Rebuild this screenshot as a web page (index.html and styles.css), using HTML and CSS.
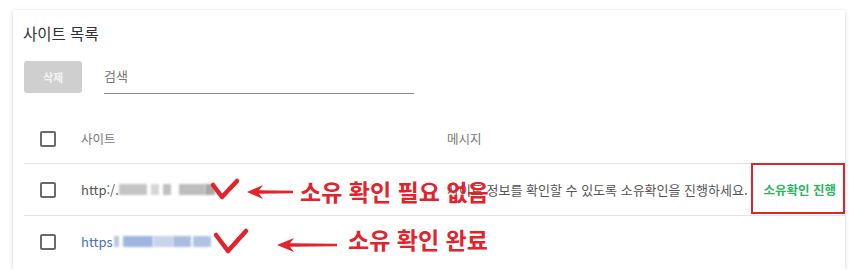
FILE: index.html
```html
<!DOCTYPE html>
<html lang="ko">
<head>
<meta charset="utf-8">
<link rel="stylesheet" href="styles.css">
</head>
<body>
<div class="card">
  <h2 class="title">사이트 목록</h2>
  <div class="toolbar">
    <button class="btn-delete" disabled>삭제</button>
    <div class="search">검색</div>
  </div>
  <div class="table">
    <div class="row head">
      <div class="cell check"><span class="box"></span></div>
      <div class="cell site">사이트</div>
      <div class="cell msg">메시지</div>
    </div>
    <div class="row">
      <div class="cell check"><span class="box"></span></div>
      <div class="cell site"><span class="url">http:/.</span><span class="blur b1"></span><span class="blur b2"></span><span class="blur b3"></span><span class="blur b4"></span><span class="blur b5"></span></div>
      <div class="cell msg"><span class="msg-text">사이트 정보를 확인할 수 있도록 소유확인을 진행하세요.</span><a class="verify">소유확인 진행</a></div>
    </div>
    <div class="row">
      <div class="cell check"><span class="box"></span></div>
      <div class="cell site"><span class="url link">https</span><span class="blur c1"></span><span class="blur c2"></span><span class="blur c3"></span><span class="blur c4"></span><span class="blur c5"></span></div>
      <div class="cell msg"></div>
    </div>
  </div>

  <svg class="mark mark1" viewBox="0 0 30 22"><path d="M3 7 L12 19 L27 3" /></svg>
  <svg class="arrow arrow1" viewBox="0 0 46 14"><path d="M0 7 L16 0 L12 5.2 L46 5.8 L46 8.2 L12 8.8 L16 14 Z" /></svg>
  <div class="note note1">소유 확인 필요 없음</div>

  <svg class="mark mark2" viewBox="0 0 36 26"><path d="M3 7 L15 23 L33 3" /></svg>
  <svg class="arrow arrow2" viewBox="0 0 60 14"><path d="M0 7 L17 0 L13 5.2 L60 5.8 L60 8.2 L13 8.8 L17 14 Z" /></svg>
  <div class="note note2">소유 확인 완료</div>

  <div class="redbox"></div>
</div>
</body>
</html>
```

FILE: styles.css
```css
* { box-sizing: border-box; }
html, body { margin: 0; padding: 0; background: #fff; }
body {
  font-family: "Noto Sans CJK KR", "Noto Sans", sans-serif;
  color: #555;
}
.card {
  position: relative;
  margin: 10px 0 0 13px;
  width: 832px;
  height: 259px;
  background: #fff;
  box-shadow: 0 1px 4px rgba(0,0,0,0.18), 0 0 1px rgba(0,0,0,0.06);
  padding: 13px 0 0 10px;
}
.title {
  margin: 0;
  font-size: 15.5px;
  font-weight: 400;
  line-height: 20px;
  color: #333;
}
.toolbar {
  display: flex;
  align-items: flex-start;
  margin-top: 18px;
  height: 33px;
}
.btn-delete {
  margin-left: 1px;
  width: 58px;
  height: 32px;
  border: none;
  border-radius: 3px;
  background: #cfcfcf;
  color: #f4f4f4;
  font-family: inherit;
  font-size: 11px;
  font-weight: 700;
  padding: 0;
}
.search {
  margin-left: 22px;
  width: 310px;
  height: 33px;
  border-bottom: 1px solid #8a8a8a;
  font-size: 13px;
  line-height: 30px;
  color: #777;
}
.table {
  margin-top: 20px;
  margin-left: 1px;
}
.row {
  display: grid;
  grid-template-columns: 57px 366px 1fr;
  align-items: center;
  height: 52px;
  border-top: 1px solid #e4e4e4;
}
.row.head {
  height: 49px;
  border-top: none;
}
.cell { display: flex; align-items: center; }
.check { padding-left: 16px; }
.box {
  width: 16px;
  height: 16px;
  border: 2px solid #6a6a6a;
  border-radius: 2px;
}
.head .cell { font-size: 12.5px; color: #777; }
.site { font-size: 13px; }
.url { color: #555; }
.url.link { color: #3f6fc6; }
.blur { display: inline-block; height: 11px; filter: blur(1px); }
.b1 { width: 28px; background: #c4c4c4; }
.b2 { width: 8px; margin-left: 4px; background: #d6d6d6; }
.b3 { width: 8px; margin-left: 4px; background: #c0c0c0; }
.b4 { width: 26px; margin-left: 8px; background: #bdbdbd; }
.b5 { width: 10px; background: #a8a8a8; }
.c1 { width: 5px; background: #b8c8e4; margin-left: 1px; }
.c2 { width: 30px; margin-left: 4px; background: #9db5df; }
.c3 { width: 20px; background: #c7d4ec; }
.c4 { width: 18px; background: #a9bde2; }
.c5 { width: 18px; margin-left: 2px; background: #b0c2e4; }
.msg { font-size: 13px; color: #555; }
.msg-text { white-space: nowrap; }
.verify {
  margin-left: 16px;
  color: #2bb55f;
  font-weight: 700;
  font-size: 12.5px;
  white-space: nowrap;
}
.mark, .arrow { position: absolute; overflow: visible; }
.mark path { fill: none; stroke: #e3222b; stroke-width: 4.5; stroke-linecap: round; stroke-linejoin: round; }
.arrow path { fill: #e3222b; }
.mark1 { left: 197px; top: 168px; width: 30px; height: 22px; }
.arrow1 { left: 234px; top: 175px; width: 46px; height: 14px; }
.mark2 { left: 200px; top: 218px; width: 36px; height: 26px; }
.arrow2 { left: 264px; top: 228px; width: 60px; height: 14px; }
.note {
  position: absolute;
  font-size: 23px;
  font-weight: 700;
  line-height: 26px;
  color: #e3222b;
  white-space: nowrap;
}
.note1 { left: 287px; top: 168px; }
.note2 { left: 335px; top: 216px; }
.redbox {
  position: absolute;
  left: 738px;
  top: 153px;
  width: 94px;
  height: 51px;
  border: 2px solid #d9262e;
}
```
